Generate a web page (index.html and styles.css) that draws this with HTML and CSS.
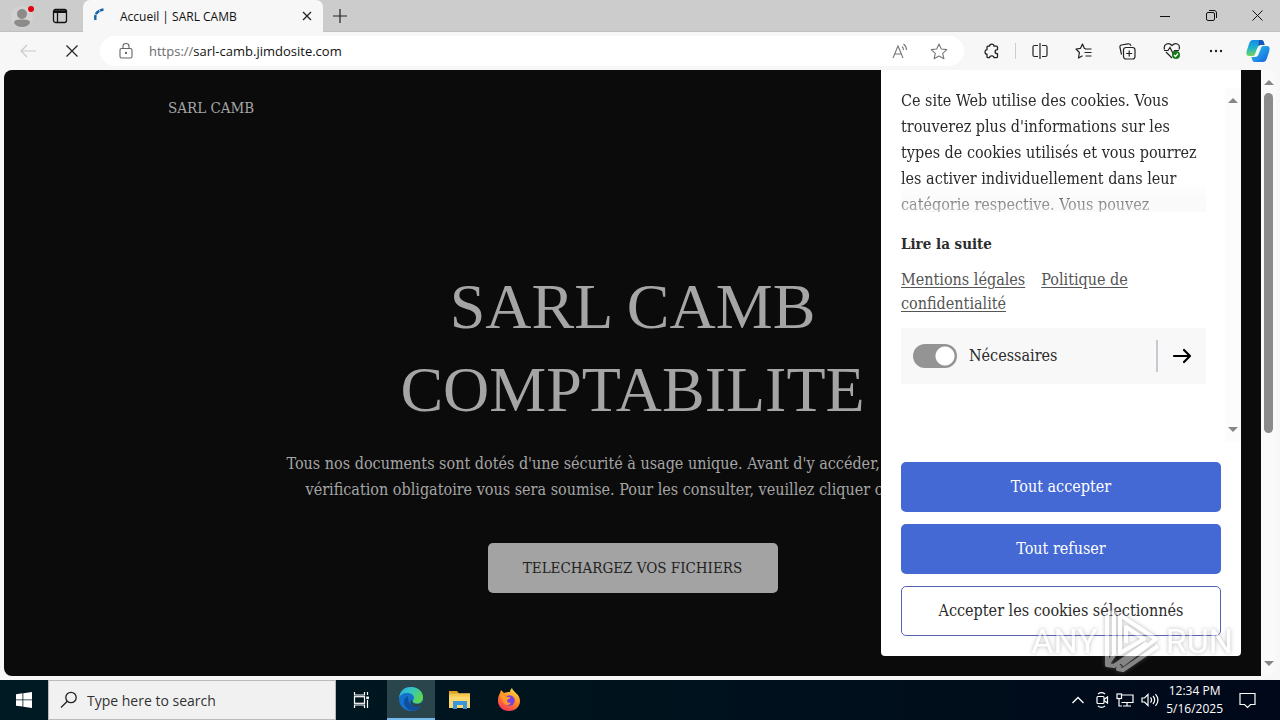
FILE: index.html
```html
<!DOCTYPE html>
<html lang="fr">
<head>
<meta charset="utf-8">
<title>Accueil | SARL CAMB</title>
<link rel="stylesheet" href="styles.css">
</head>
<body>
<div class="tabbar">
  <button class="profile" aria-label="Profile"><svg width="24" height="24" viewBox="0 0 24 24"><circle cx="12" cy="13" r="11" fill="#d2d2d2"/><circle cx="12" cy="10" r="5" fill="#8d8a88"/><path d="M4 19c0-3 3-3.500 8-3.500s8 .5 8 3.500c-2 3-5 4-8 4s-6-1-8-4z" fill="#8d8a88"/><circle cx="21" cy="5" r="3" fill="#e3000f"/></svg></button>
  <button class="tabmenu" aria-label="Tab actions"><svg width="16" height="16" viewBox="0 0 16 16" fill="none" stroke="#111" stroke-width="1.300"><rect x="1.500" y="1.500" width="13" height="13" rx="2"/><path d="M2 3h12M2 4.300h12M5.500 5v9" /></svg></button>
  <div class="tab">
    <svg width="18" height="18" viewBox="0 0 18 18" fill="none" stroke="#1565a8" stroke-width="2.500"><path d="M2.500 13C1.300 7.500 4 3.500 10.500 2.500" stroke-dasharray="5 .7"/></svg>
    <span class="tabtitle">Accueil | SARL CAMB</span>
    <button class="tabclose" aria-label="Close tab"><svg width="10" height="10" viewBox="0 0 10 10" stroke="#222" stroke-width="1.300"><path d="M1 1l8 8M9 1L1 9"/></svg></button>
  </div>
  <button class="newtab" aria-label="New tab"><svg width="14" height="14" viewBox="0 0 14 14" stroke="#222" stroke-width="1.200"><path d="M7 0v14M0 7h14"/></svg></button>
  <div class="winctl">
    <button aria-label="Minimize"><svg width="10" height="10" viewBox="0 0 10 10" stroke="#111"><path d="M0 5.500h10"/></svg></button>
    <button aria-label="Restore"><svg width="11" height="11" viewBox="0 0 11 11" fill="none" stroke="#111"><rect x=".5" y="2.500" width="8" height="8" rx="1.500"/><path d="M3 .5h5c1.500 0 2.500 1 2.500 2.500v5"/></svg></button>
    <button aria-label="Close"><svg width="11" height="11" viewBox="0 0 11 11" stroke="#111"><path d="M.5.5l10 10M10.500.5l-10 10"/></svg></button>
  </div>
</div>

<div class="toolbar">
  <button class="back" aria-label="Back"><svg width="16" height="14" viewBox="0 0 16 14" fill="none" stroke="#c9c9c9" stroke-width="1.200"><path d="M16 7H1M7 1L1 7l6 6"/></svg></button>
  <button class="stop" aria-label="Stop"><svg width="12" height="12" viewBox="0 0 12 12" stroke="#222" stroke-width="1.200"><path d="M.5.5l11 11M11.500.5l-11 11"/></svg></button>
  <div class="address">
    <svg width="14" height="18" viewBox="0 0 14 18" fill="none" stroke="#666" stroke-width="1.100"><rect x="1" y="6.500" width="12" height="9.500" rx="1.500"/><path d="M4 6.500V4.200C4 .5 10 .5 10 4.200v2.300"/><circle cx="7" cy="11" r=".6" fill="#666"/></svg>
    <div class="url"><span>https://</span>sarl-camb.jimdosite.com</div>
    <button aria-label="Read aloud"><svg width="16" height="16" viewBox="0 0 16 16" fill="none" stroke="#777" stroke-width="1.100"><path d="M1 15L6 3l5 12M2.700 11h6.700M10 3.500c1 .8 1.500 2 1.500 3.500M11.500 1c2 1.500 3 3.500 3 6"/></svg></button>
    <button class="star" aria-label="Add to favorites"><svg width="18" height="17" viewBox="0 0 18 17" fill="none" stroke="#777" stroke-width="1.100" stroke-linejoin="round"><path d="M9 1l2.300 5 5.500.6-4.100 3.700 1.200 5.500L9 13l-4.900 2.800 1.200-5.500L1.200 6.600 6.700 6z"/></svg></button>
  </div>
  <div class="tools">
    <button aria-label="Extensions"><svg width="16" height="17" viewBox="0 0 16 17" fill="none" stroke="#222" stroke-width="1.300" stroke-linejoin="round"><path d="M5.500 3.200C5.500.4 10 .4 10 3.200h2.500q1 0 1 1v2.500c-3.200 0-3.200 4 0 4v3q0 1-1 1H10c0-2.500-4.500-2.500-4.500 0H4q-1 0-1-1v-2.500C.4 11.200.4 6.700 3 6.700V4.200q0-1 1-1z"/></svg></button>
    <i class="sep"></i>
    <button aria-label="Split screen"><svg width="16" height="16" viewBox="0 0 16 16" fill="none" stroke="#222" stroke-width="1.200"><path d="M8 0v16M6 2.500H2.500Q1 2.500 1 4v8q0 1.500 1.500 1.500H6M10 2.500h3.500Q15 2.500 15 4v8q0 1.500-1.500 1.500H10"/></svg></button>
    <button aria-label="Favorites"><svg width="17" height="16" viewBox="0 0 17 16" fill="none" stroke="#222" stroke-width="1.200" stroke-linejoin="round"><path d="M10.500 5.500L9.300 5.300 7.500 1 5.500 5.300 1 6l3.400 3.500L3.500 15l4-2.200M10 6h6.500M9.500 9.500h7M10.500 13h6"/></svg></button>
    <button aria-label="Collections"><svg width="17" height="17" viewBox="0 0 17 17" fill="none" stroke="#222" stroke-width="1.200"><rect x="4.500" y="4.500" width="11.500" height="11.500" rx="2.500"/><path d="M10.200 7.500v6M7.200 10.500h6M2.500 11.500L1 4.500C.7 3 1.300 2.200 2.500 2L9 .8c1.500-.2 2.500.7 3 2"/></svg></button>
    <button aria-label="Browser essentials"><svg width="18" height="18" viewBox="0 0 18 18" fill="none" stroke="#222" stroke-width="1.200"><path d="M1.500 7.500C0 1.500 6 0 9 3.500 12 0 18 1.500 16 7.500M3 10l6 6M1 8.500h4l2-3 3 6 1.500-3H16"/><circle cx="13" cy="13" r="4" fill="#137a16" stroke="none"/><path d="M11 13l1.500 1.500 2.500-3" stroke="#fff"/></svg></button>
    <button aria-label="Settings and more"><svg width="14" height="4" viewBox="0 0 14 4" fill="#222"><circle cx="2" cy="2" r="1.200"/><circle cx="7" cy="2" r="1.200"/><circle cx="12" cy="2" r="1.200"/></svg></button>
    <button class="copilot" aria-label="Copilot"><svg width="24" height="24" viewBox="0 0 24 24"><defs><linearGradient id="ca" x1="0" y1="0" x2="0" y2="1"><stop offset="0" stop-color="#1689e8"/><stop offset=".5" stop-color="#20b2cb"/><stop offset="1" stop-color="#74d75b"/></linearGradient><linearGradient id="cb" x1="0" y1="0" x2="1" y2="1"><stop offset="0" stop-color="#2cc7ef"/><stop offset="1" stop-color="#1460dc"/></linearGradient></defs><path d="M7 1h8c2 0 2.500 1 3 3l.6 2H15c-2 0-3 1-3.700 3L9 15c-.7 2-1.500 2-3 2H3c-3 0-3-3-2-6l2-6c.8-2.500 2-4 4-4z" fill="url(#ca)"/><path d="M17 23H9c-2 0-2.500-1-3-3l-.6-2H9c2 0 3-1 3.700-3L15 9c.7-2 1.500-2 3-2h3c3 0 3 3 2 6l-2 6c-.8 2.500-2 4-4 4z" fill="url(#cb)"/><path d="M13 1h2c2 0 2.500 1 3 3l.6 2H15c-1 0-2 .5-2.600 1z" fill="#1554b8"/></svg></button>
  </div>
</div>

<div class="window">
  <main class="site">
    <header class="sitenav"><a href="#">SARL CAMB</a></header>
    <section class="hero">
      <h1>SARL CAMB<br>COMPTABILITE</h1>
      <p>Tous nos documents sont dotés d'une sécurité à usage unique. Avant d'y accéder, une dernière<br>vérification obligatoire vous sera soumise. Pour les consulter, veuillez cliquer ci-dessous :</p>
      <button class="download">TELECHARGEZ VOS FICHIERS</button>
    </section>
    <aside class="cookies" aria-label="Cookies">
      <div class="cookiescroll">
        <div class="cookiebody">
          <p class="intro">Ce site Web utilise des cookies. Vous<br>trouverez plus d'informations sur les<br>types de cookies utilisés et vous pourrez<br>les activer individuellement dans leur<br>catégorie respective. Vous pouvez</p>
          <button class="more">Lire la suite</button>
          <p class="links"><a href="#">Mentions légales</a><a href="#">Politique de confidentialité</a></p>
          <div class="category">
            <input type="checkbox" id="need" checked><label for="need">Nécessaires</label>
            <button aria-label="Détails"><svg width="20" height="16" viewBox="0 0 20 16" fill="none" stroke="#000" stroke-width="2.200" stroke-linecap="round" stroke-linejoin="round"><path d="M2 8h16M12 2l6 6-6 6"/></svg></button>
          </div>
        </div>
        <div class="track"><i class="up"></i><i class="down"></i></div>
      </div>
      <div class="actions">
        <button>Tout accepter</button>
        <button>Tout refuser</button>
        <button class="outline">Accepter les cookies sélectionnés</button>
      </div>
    </aside>
  </main>
  <div class="scrollbar"><i class="up"></i><i class="thumb"></i><i class="down"></i></div>
  <div class="watermark"><span>ANY</span><svg width="60" height="62" viewBox="0 0 60 62" fill="none" stroke="#fff" stroke-width="4" stroke-linejoin="round"><path d="M5 55V4l7-2v43M12 45L5 55l7 1 33-23M18 5l36 24-34 26M18 5v38l24-14L24 17v16M18 55l-2 4 5 1 35-24"/></svg><span>RUN</span></div>
</div>

<footer class="taskbar">
  <button class="start" aria-label="Start"><svg width="16" height="16" viewBox="0 0 16 16" fill="#fff"><path d="M0 2.200L6.500 1.300v6.200H0zM7.300 1.200L16 0v7.500H7.300zM0 8.300h6.500v6.300L0 13.700zM7.300 8.300H16V16l-8.700-1.200z"/></svg></button>
  <label class="search"><svg width="18" height="18" viewBox="0 0 18 18" fill="none" stroke="#222" stroke-width="1.300"><circle cx="11" cy="6.500" r="5.200"/><path d="M7.300 10.200L1 16.500"/></svg><input type="text" placeholder="Type here to search" aria-label="Search"></label>
  <div class="apps">
    <button aria-label="Task view"><svg width="18" height="16" viewBox="0 0 18 16" fill="none" stroke="#fff" stroke-width="1.200"><path d="M1.500 0v3h10V0M1.500 16v-3h10v3M14.500 0v3M14.500 8v8"/><rect x="1.500" y="4.700" width="10" height="6.600"/><rect x="13.300" y="4.500" width="2.600" height="2.600" fill="#fff" stroke="none"/></svg></button>
    <button class="active" aria-label="Edge"><svg width="26" height="26" viewBox="0 0 26 26"><defs><linearGradient id="ea" x1="0" y1="0" x2="1" y2=".5"><stop offset="0" stop-color="#27a9e6"/><stop offset=".5" stop-color="#35c6c0"/><stop offset="1" stop-color="#5bd750"/></linearGradient></defs><circle cx="13" cy="13" r="12" fill="#1272cc"/><path d="M1 12C2 4 7 1 13 1c8 0 12 5.500 12 10.500 0 4-3 6-6 6s-4.500-1-4.500-2.200S16 14 16 12c0-2.500-2.500-5-6.500-5C5 7 2 9 1 12z" fill="url(#ea)"/><path d="M10 10c-4 2-5 6-3 10 2 3.500 5 5 8 4.700 3.500-.5 6.500-2.500 8.300-6-4 2-8.800 1.500-11.300-1.200-2-2.200-2.200-5-2-7.500z" fill="#114f9c"/><path d="M14.500 15.500c0 1.200 1.500 2.500 4.500 2.500 3 0 5-1.200 6-3.500l.5 3-2 2.200c-4 1.800-8.500.8-10.300-1.500-1-1.500-.8-3.200 0-4.700z" fill="#2b454d"/></svg></button>
    <button aria-label="File Explorer"><svg width="24" height="20" viewBox="0 0 24 20"><path d="M1 1h8l2 2.500H1z" fill="#e8a21c"/><path d="M1 3.500h21v14.500H1z" fill="#fbd86e"/><path d="M1 3.500h21v3H1z" fill="#f6c94e"/><path d="M5 11h14v8h-4v-4H9v4H5z" fill="#3c96dc"/></svg></button>
    <button aria-label="Firefox"><svg width="24" height="24" viewBox="0 0 24 24"><defs><linearGradient id="fa" x1=".8" y1="0" x2=".3" y2="1"><stop offset="0" stop-color="#ffe14a"/><stop offset=".5" stop-color="#ff8a22"/><stop offset="1" stop-color="#f8335e"/></linearGradient></defs><path d="M3 5l1-3 3 3c2-1 4-1 6-1 0-2 1-3 2-4 1 4 8 6 8 13 0 6-5 10-11 10S1 19 1 13c0-3 .5-5.500 2-8z" fill="url(#fa)"/><circle cx="12.500" cy="12.500" r="5.200" fill="#7a3fe0"/><path d="M3 7c3-1 5 0 7 2 1 0 3 0 3.500.7-1 1.600-3 1.300-3.500 2.800-.2 1.500 2 3 4 2-1.500 4-7 3-8-1" fill="#ff9a28"/></svg></button>
  </div>
  <div class="tray">
    <svg width="12" height="8" viewBox="0 0 12 8" fill="none" stroke="#fff" stroke-width="1.300"><path d="M.5 7L6 1.500 11.500 7"/></svg>
    <svg width="14" height="16" viewBox="0 0 14 16" fill="none" stroke="#fff" stroke-width="1.200"><rect x="2" y="4.500" width="7" height="7" rx="1"/><path d="M9 7.500L12.500 5v6L9 8.500M3 2c2-1.500 5-1.500 7 0M3 14c2 1.500 5 1.500 7 0"/></svg>
    <svg width="18" height="14" viewBox="0 0 18 14" fill="none" stroke="#fff" stroke-width="1.200"><path d="M6 2h11v7.500H5.500M11 9.500V13M7 13h8M3 6v7h3"/><rect x="1" y="1" width="4.500" height="4.500"/></svg>
    <svg width="18" height="14" viewBox="0 0 18 14" fill="none" stroke="#fff" stroke-width="1.200"><path d="M1 5h2.500L7 1.500v11L3.500 9H1zM9.500 4.500c1.300 1.500 1.300 3.500 0 5M12 3c2 2.400 2 5.600 0 8M14.500 1.200c3 3.500 3 8 0 11.600"/></svg>
    <time class="clock"><span>12:34 PM</span><span>5/16/2025</span></time>
    <svg width="17" height="17" viewBox="0 0 17 17" fill="none" stroke="#fff" stroke-width="1.200"><path d="M1 1.500h15v11h-4.500l-3 3-3-3H1z"/></svg>
  </div>
</footer>
</body>
</html>
```
FILE: styles.css
```css
* { box-sizing: border-box; }
body {
  margin: 0;
  min-height: 100vh;
  display: grid;
  grid-template-rows: 32px 38px 1fr 40px;
  background: #f7f7f7;
  font-family: "Open Sans", "Noto Sans", sans-serif;
  font-size: 12px;
  color: #111;
}
button {
  border: 0;
  padding: 0;
  background: none;
  font: inherit;
  color: inherit;
  display: flex;
  align-items: center;
  justify-content: center;
}
svg { flex: none; }

.tabbar { display: flex; background: #ccc; border-bottom: 1px solid #c0c0c0; }
.profile { margin-left: 9px; width: 26px; }
.tabmenu { margin-left: 13px; width: 24px; }
.tab {
  display: flex;
  align-items: center;
  width: 240px;
  height: 32px;
  margin-left: 11px;
  padding: 0 10px;
  background: #f7f7f7;
  border-radius: 7px 7px 0 0;
}
.tabtitle { flex: 1; margin-left: 9px; }
.tabclose { width: 12px; }
.newtab { margin-left: 8px; width: 18px; }
.winctl { display: flex; margin-left: auto; }
.winctl button { width: 46px; }

.toolbar { display: flex; align-items: center; }
.back { margin-left: 20px; width: 16px; }
.stop { margin-left: 30px; width: 12px; }
.address {
  flex: 1;
  display: flex;
  align-items: center;
  height: 30px;
  margin-left: 22px;
  padding: 0 16px 0 19px;
  border-radius: 15px;
  background: #fff;
}
.url { flex: 1; margin-left: 16px; font-size: 13px; }
.url span { color: #6b6b6b; }
.star { margin-left: 22px; }
.tools { display: flex; align-items: center; margin-left: 19px; padding-right: 10px; gap: 27px; }
.tools button { width: 17px; }
.tools .sep { width: 1px; height: 16px; margin: 0 -12px; background: #ccc; }
.tools .copilot { width: 24px; margin-left: -5px; }

.window { position: relative; display: flex; margin: 0 4px 4px; border-radius: 8px; background: #fafafa; }
.site {
  position: relative;
  flex: 1;
  overflow: hidden;
  border-radius: 8px 0 0 8px;
  background: #0b0b0b;
  color: #a5a5a5;
  font-family: "DejaVu Serif Condensed", "Liberation Serif", serif;
  font-size: 16px;
  line-height: 26px;
}
.sitenav { padding: 25px 164px; }
.sitenav a { color: inherit; font-size: 15px; text-decoration: none; }
.hero { display: flex; flex-direction: column; align-items: center; padding-top: 119px; text-align: center; }
.hero h1 { margin: 0; font: 400 64px/83px "Liberation Serif", serif; }
.hero p { margin: 20px 0 40px; white-space: nowrap; }
.download { width: 290px; height: 50px; border-radius: 5px; background: #a3a3a3; color: #222; font-size: 15px; }

.cookies {
  position: absolute;
  top: 0;
  right: 20px;
  bottom: 20px;
  width: 360px;
  display: flex;
  flex-direction: column;
  padding: 18px 0 20px 20px;
  border-radius: 0 0 4px 4px;
  background: #fff;
  color: #2b2b2b;
}
.cookiescroll { flex: 1; display: flex; justify-content: space-between; }
.cookiebody { width: 305px; }
.intro {
  height: 124px;
  margin: 0;
  overflow: hidden;
  background: linear-gradient(#fff 96px, #f3f3f3);
  white-space: nowrap;
  -webkit-mask-image: linear-gradient(#000 96px, rgba(0, 0, 0, .35) 124px);
  mask-image: linear-gradient(#000 96px, rgba(0, 0, 0, .35) 124px);
}
.more { margin-top: 19px; height: 26px; font-size: 15px; font-weight: 700; }
.links { margin: 11px 0 12px; line-height: 24px; }
.links a { color: #555; text-underline-offset: 2px; }
.links a + a { margin-left: 16px; }
.category { display: flex; align-items: center; height: 56px; padding: 0 14px 0 12px; background: #f8f8f8; }
.category input {
  appearance: none;
  width: 44px;
  height: 24px;
  margin: 0 12px 0 0;
  border-radius: 12px;
  background: radial-gradient(circle at 32px 12px, #fff 9px, #949494 10px);
}
.category label { flex: 1; }
.category button { height: 32px; padding-left: 14px; border-left: 2px solid #c8c9d2; }
.track { display: flex; flex-direction: column; justify-content: space-between; align-items: center; width: 16px; padding: 10px 0; background: #fcfcfc; }
.up, .down { border: 5px solid transparent; }
.up { border-top: 0; border-bottom-color: #868686; }
.down { border-bottom: 0; border-top-color: #868686; }
.actions { display: flex; flex-direction: column; gap: 12px; padding: 20px 20px 0 0; }
.actions button { height: 50px; border-radius: 5px; background: #4468d4; color: #fff; }
.actions .outline { border: 1px solid #5661b4; background: #fff; color: #2b2b2b; }

.scrollbar { display: flex; flex-direction: column; align-items: center; width: 15px; padding: 10px 0; }
.scrollbar .thumb { width: 9px; height: 58%; margin: 8px 0 auto; border-radius: 5px; background: #8b8b8b; }

.watermark {
  position: absolute;
  right: 43px;
  bottom: 4px;
  display: flex;
  align-items: center;
  gap: 4px;
  color: #fff;
  font: 400 34px/44px "Roboto", sans-serif;
  opacity: .5;
  filter: drop-shadow(0 0 2px #777);
  pointer-events: none;
}

.taskbar { display: flex; background: linear-gradient(90deg, #001a23, #00131d 50%, #00081a); color: #fff; }
.start { width: 48px; }
.search { display: flex; align-items: center; width: 288px; padding-left: 11px; background: #f1f1f1; border: 1px solid #b9b9b9; }
.search input { flex: 1; min-width: 0; margin-left: 9px; padding: 0; border: 0; background: none; font: 14px "Open Sans", sans-serif; }
.search input::placeholder { color: #333; opacity: 1; }
.apps { display: flex; gap: 1px; padding-left: 2px; }
.apps button { width: 48px; }
.apps .active { background: #2b454d; border-bottom: 2px solid #76b9ed; }
.tray { display: flex; align-items: center; margin-left: auto; padding-right: 24px; gap: 7px; }
.tray > svg:first-child { margin-right: 4px; }
.clock { display: flex; flex-direction: column; align-items: center; margin: 0 9px 0 0; line-height: 18px; }
```
